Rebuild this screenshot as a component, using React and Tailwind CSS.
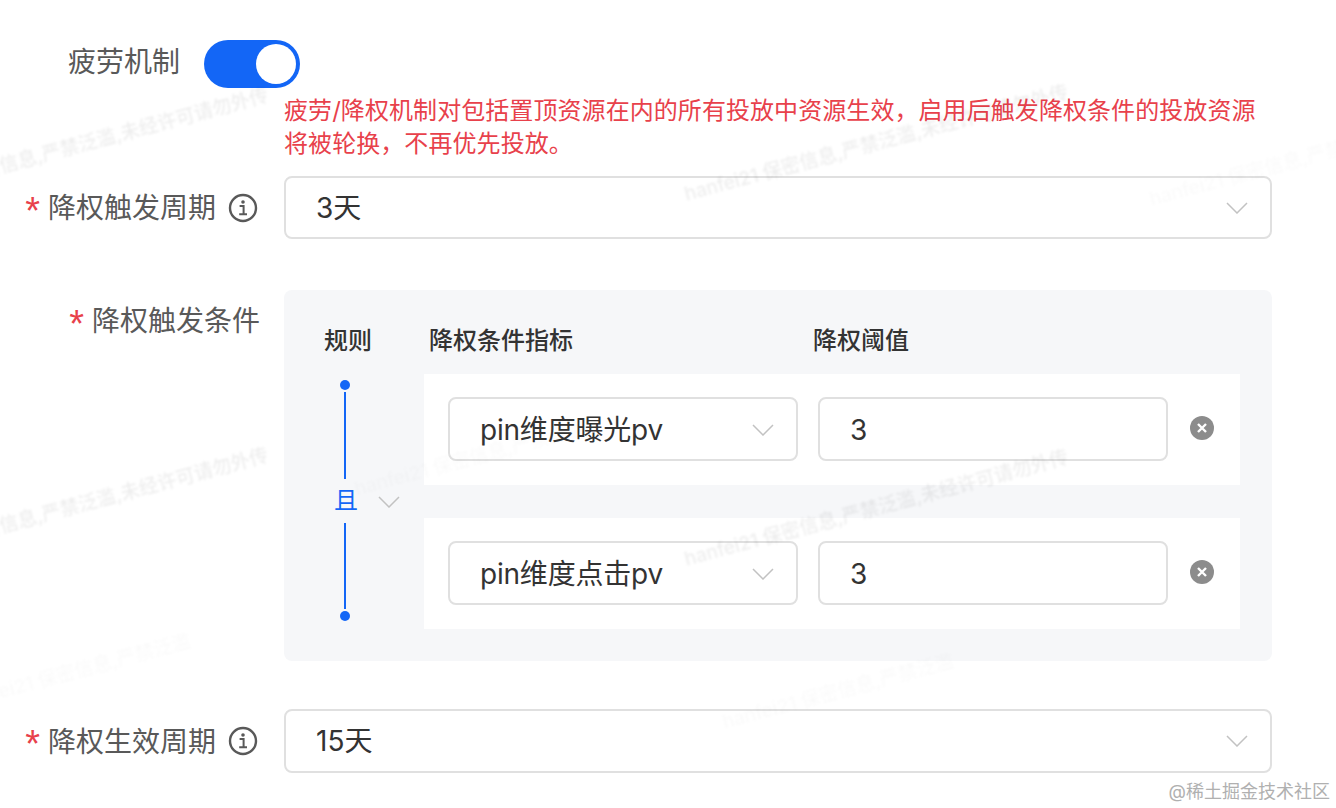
const FONT = { fontFamily: 'Inter, "Noto Sans CJK SC", sans-serif' };

function Chevron({ className }) {
  return (
    <svg width="22" height="12" viewBox="0 0 22 12" fill="none" className={className}>
      <polyline points="1,1 11,11 21,1" stroke="#c2c2c2" strokeWidth="1.5" />
    </svg>
  );
}

function InfoIcon() {
  return (
    <svg width="30" height="30" viewBox="0 0 30 30" fill="none">
      <circle cx="15" cy="15" r="13" stroke="#595959" strokeWidth="2.4" />
      <circle cx="15" cy="9" r="1.8" fill="#595959" />
      <path d="M11.6 13h4v7.8M11.2 21.2h7.8" stroke="#595959" strokeWidth="2" />
    </svg>
  );
}

function RemoveIcon() {
  return (
    <svg width="24" height="24" viewBox="0 0 24 24" fill="none">
      <circle cx="12" cy="12" r="12" fill="#8c8c8c" />
      <path d="M8 8l8 8M16 8l-8 8" stroke="#fff" strokeWidth="2.4" />
    </svg>
  );
}

function Label({ children, info, textClass = '', className = '' }) {
  return (
    <div className={`w-[260px] mr-6 shrink-0 flex justify-end items-center gap-3 text-[28px] text-[#595959] ${info ? 'pr-[2px]' : ''} ${className}`}>
      <div className="flex items-center gap-2">
        <span className="font-['Liberation_Sans'] text-[38px] text-[#e8414b] leading-none pt-[6px]">*</span>
        <span className={textClass}>{children}</span>
      </div>
      {info && <InfoIcon />}
    </div>
  );
}

function Select({ value, className = '' }) {
  return (
    <div className={`flex items-center justify-between border-2 border-[#e0e0e0] rounded-lg bg-white text-[28px] text-[#333] pl-[30px] ${className}`}>
      <span>{value}</span>
      <Chevron />
    </div>
  );
}

function ConditionRow({ metric, threshold }) {
  return (
    <div className="h-[111px] bg-white flex items-center pl-6 pb-[1px]">
      <Select value={metric} className="w-[350px] h-[64px] pr-[22px] pt-[2px] tracking-[-0.2px]" />
      <div className="w-[350px] h-[64px] ml-5 flex items-center border-2 border-[#e0e0e0] rounded-lg bg-white text-[28px] text-[#333] pl-[30px] pt-[2px]">
        {threshold}
      </div>
      <div className="ml-[22px] mb-[2px] flex">
        <RemoveIcon />
      </div>
    </div>
  );
}

const FULL = 'hanfei21 保密信息,严禁泛滥,未经许可请勿外传';
const SHORT = 'hanfei21 保密信息,严禁泛滥';

const MARKS = [
  [-115, 198, FULL, 'text-[#000]/[0.07]'],
  [685, 195, FULL, 'text-[#000]/[0.07]'],
  [-115, 558, FULL, 'text-[#000]/[0.07]'],
  [685, 560, FULL, 'text-[#000]/[0.07]'],
  [-40, 703, SHORT, 'text-[#000]/[0.02]'],
  [723, 723, SHORT, 'text-[#000]/[0.02]'],
  [1150, 200, SHORT, 'text-[#000]/[0.02]'],
  [355, 490, SHORT, 'text-[#000]/[0.02]'],
];

function Watermarks() {
  return (
    <div className="absolute inset-0 pointer-events-none overflow-hidden">
      {MARKS.map(([x, y, text, tone], i) => (
        <div
          key={i}
          className={`absolute whitespace-nowrap text-[19px] leading-7 font-medium blur-[1.2px] origin-left -rotate-[15deg] ${tone}`}
          style={{ left: x, top: y - 14 }}
        >
          {text}
        </div>
      ))}
    </div>
  );
}

export default function App() {
  return (
    <div style={FONT} className="relative w-[1336px] h-[808px] overflow-hidden bg-white pt-10">
      <div className="flex items-center h-12 pl-[68px] gap-6">
        <span className="text-[28px] text-[#595959] mb-1">疲劳机制</span>
        <div className="w-24 h-12 rounded-full bg-[#1366f6] p-1 flex justify-end">
          <div className="w-10 h-10 rounded-full bg-white" />
        </div>
      </div>

      <div className="ml-[284px] mt-[6px] w-[990px] text-[24px] leading-[33px] tracking-[0.07px] text-[#e8414b]">
        疲劳/降权机制对包括置顶资源在内的所有投放中资源生效，启用后触发降权条件的投放资源将被轮换，不再优先投放。
      </div>

      <div className="flex items-center mt-4">
        <Label info>降权触发周期</Label>
        <Select value="3天" className="w-[988px] h-[63px] pr-[22px]" />
      </div>

      <div className="flex mt-[51px]">
        <Label className="h-[62px] self-start">降权触发条件</Label>
        <div className="w-[988px] h-[371px] rounded-lg bg-[#f6f7f9] pt-[34px] pb-8">
          <div className="flex h-[34px] mb-4 text-[24px] leading-[34px] font-medium text-[#333]">
            <span className="ml-10 w-[105px]">规则</span>
            <span className="w-[384px]">降权条件指标</span>
            <span>降权阈值</span>
          </div>
          <div className="flex">
            <div className="w-[140px] pl-10 flex items-stretch">
              <div className="w-[42px] flex flex-col items-center pt-[6px] pb-2">
                <div className="w-[10px] h-[10px] rounded-full bg-[#1366f6]" />
                <div className="w-[2px] flex-1 mt-[2px] bg-[#1366f6]" />
                <div className="text-[24px] leading-[44px] pl-[2px] text-[#1366f6]">且</div>
                <div className="w-[2px] flex-1 mb-[2px] bg-[#1366f6]" />
                <div className="w-[10px] h-[10px] rounded-full bg-[#1366f6]" />
              </div>
              <div className="flex items-center ml-[12px]">
                <Chevron />
              </div>
            </div>
            <div className="w-[816px] flex flex-col gap-[33px]">
              <ConditionRow metric="pin维度曝光pv" threshold="3" />
              <ConditionRow metric="pin维度点击pv" threshold="3" />
            </div>
          </div>
        </div>
      </div>

      <div className="flex items-center mt-12">
        <Label info textClass="pt-[2px]">降权生效周期</Label>
        <Select value="15天" className="w-[988px] h-[64px] pr-[22px]" />
      </div>

      <Watermarks />
      <div className="absolute right-[6px] bottom-[4px] text-[18px] leading-6 text-[#b0b0b0]">@稀土掘金技术社区</div>
    </div>
  );
}
